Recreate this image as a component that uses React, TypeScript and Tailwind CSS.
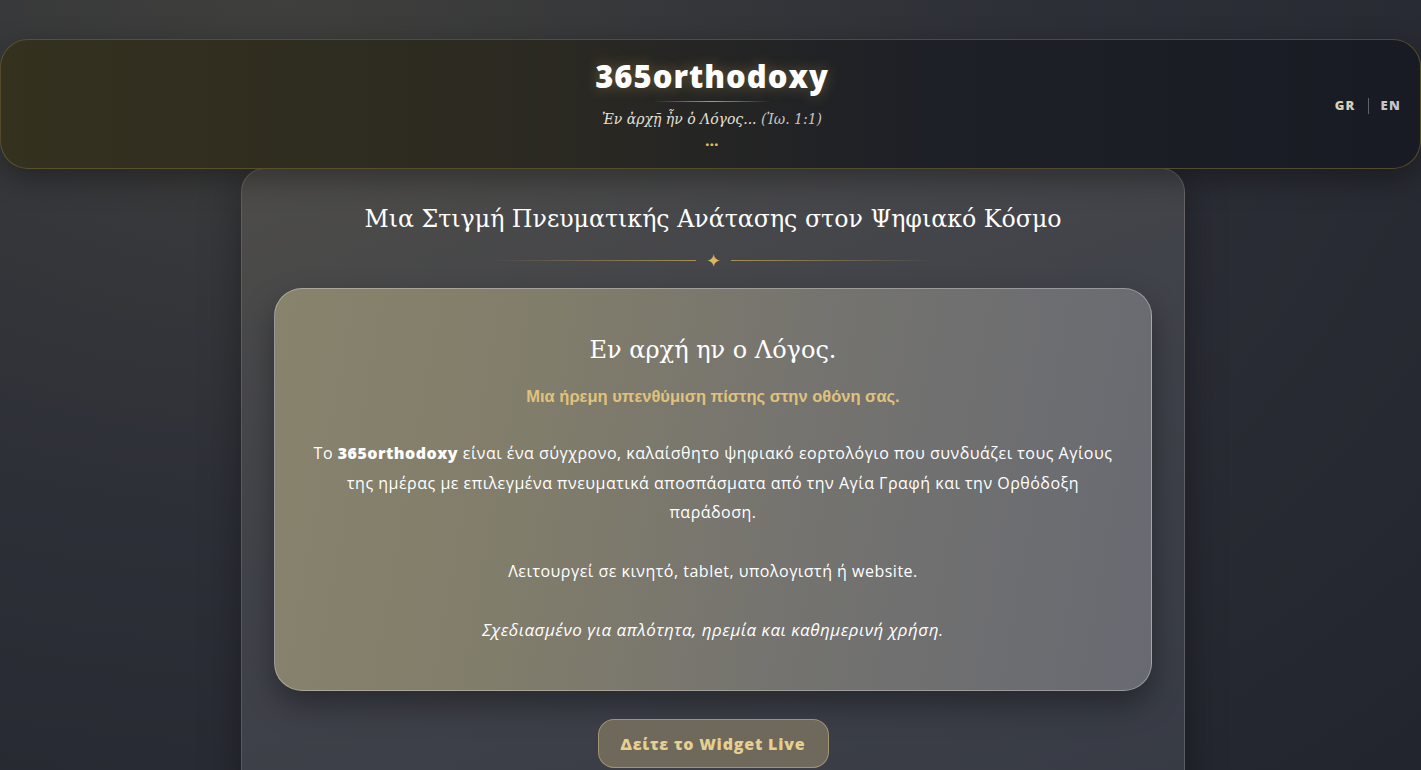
import React from "react";

const sans = "font-['Open_Sans','Noto_Sans',sans-serif]";
const serif = "font-['DejaVu_Serif','Liberation_Serif',serif]";

function Header() {
  return (
    <header className="relative z-10 mt-[39px] h-[130px] rounded-[28px] border border-[#6b5e2e]/70 bg-[linear-gradient(90deg,#35311f_0%,#2c2a21_35%,#1e2027_65%,#181b23_100%)] shadow-[0_10px_30px_rgba(0,0,0,0.35)]">
      <div className="flex flex-col items-center pt-[16px] pl-[3px]">
        <h1 className={`${sans} text-[31px] font-extrabold leading-[40px] tracking-[1px] text-white [text-shadow:0_0_14px_rgba(220,190,110,0.35)]`}>
          365orthodoxy
        </h1>
        <div className="mt-[5px] h-px w-[118px] bg-[linear-gradient(90deg,transparent,#b99a55,transparent)]" />
        <p className={`${serif} mt-[7px] text-[14px] italic leading-[20px] text-[#e4e0d6]`}>
          Ἐν ἀρχῇ ἦν ὁ Λόγος... <span className="text-[#c9c6c0]">(Ἰω. 1:1)</span>
        </p>
        <span className={`${sans} mt-[5px] text-[14px] font-extrabold leading-[14px] tracking-[0.5px] text-[#e0bd5c]`}>...</span>
      </div>
      <div className={`${sans} absolute right-[19px] top-[56px] flex items-center gap-[12px] text-[13px] font-extrabold tracking-[1.2px]`}>
        <span className="text-[#d9d1b3]">GR</span>
        <span className="h-[16px] w-px bg-[#5f6168]" />
        <span className="text-[#c2c5cc]">EN</span>
      </div>
    </header>
  );
}

function Divider() {
  return (
    <div className="mt-[14px] flex items-center justify-center gap-[10px]">
      <div className="h-px w-[205px] bg-[linear-gradient(90deg,transparent,#a88f52)]" />
      <span className="text-[18px] leading-none text-[#d9b85c]">✦</span>
      <div className="h-px w-[205px] bg-[linear-gradient(90deg,#a88f52,transparent)]" />
    </div>
  );
}

function InfoCard() {
  return (
    <div className="mx-[32px] mt-[19px] h-[403px] rounded-[28px] border border-white/30 bg-[linear-gradient(100deg,#88836c_0%,#817d6b_30%,#74736f_60%,#686a72_100%)] px-[32px] pt-[44px] shadow-[0_14px_30px_rgba(0,0,0,0.35)]">
      <h3 className={`${serif} text-center text-[24px] leading-[34px] text-white`}>Εν αρχή ην ο Λόγος.</h3>
      <p className="mt-[19px] text-center font-['Liberation_Sans',Arial,sans-serif] text-[16.5px] font-bold leading-[20px] text-[#e0c27c]">
        Μια ήρεμη υπενθύμιση πίστης στην οθόνη σας.
      </p>
      <div className={`${sans} mt-[33px] text-center text-[16px] leading-[29.5px] tracking-[0.5px] text-white`}>
        <p>
          Το <strong className="font-extrabold">365orthodoxy</strong> είναι ένα σύγχρονο, καλαίσθητο ψηφιακό εορτολόγιο που συνδυάζει τους Αγίους της ημέρας με επιλεγμένα πνευματικά αποσπάσματα από την Αγία Γραφή και την Ορθόδοξη παράδοση.
        </p>
        <p className="mt-[29px]">Λειτουργεί σε κινητό, tablet, υπολογιστή ή website.</p>
        <p className="mt-[29px] text-[17px] italic">Σχεδιασμένο για απλότητα, ηρεμία και καθημερινή χρήση.</p>
      </div>
    </div>
  );
}

export default function App() {
  return (
    <div className="h-[770px] overflow-hidden bg-[radial-gradient(ellipse_at_20%_0%,#3f3f3c_0%,#2e3038_45%,#22252d_100%)]">
      <Header />
      <main className="relative z-0 ml-[241px] -mt-px h-[700px] w-[944px] rounded-t-[24px] border border-white/15 bg-[linear-gradient(160deg,#4d4c49_0%,#41434a_40%,#363a44_100%)] pt-[32px] shadow-[0_10px_40px_rgba(0,0,0,0.35)]">
        <h2 className={`${serif} text-center text-[23.7px] leading-[36px] text-white`}>
          Μια Στιγμή Πνευματικής Ανάτασης στον Ψηφιακό Κόσμο
        </h2>
        <Divider />
        <InfoCard />
        <div className="mt-[28px] flex justify-center">
          <button
            type="button"
            className={`${sans} h-[49px] w-[231px] rounded-[16px] border border-[#b8a57a]/70 bg-[#6e695b] text-[16px] font-extrabold tracking-[0.8px] text-[#e6cf90]`}
          >
            Δείτε το Widget Live
          </button>
        </div>
      </main>
    </div>
  );
}
